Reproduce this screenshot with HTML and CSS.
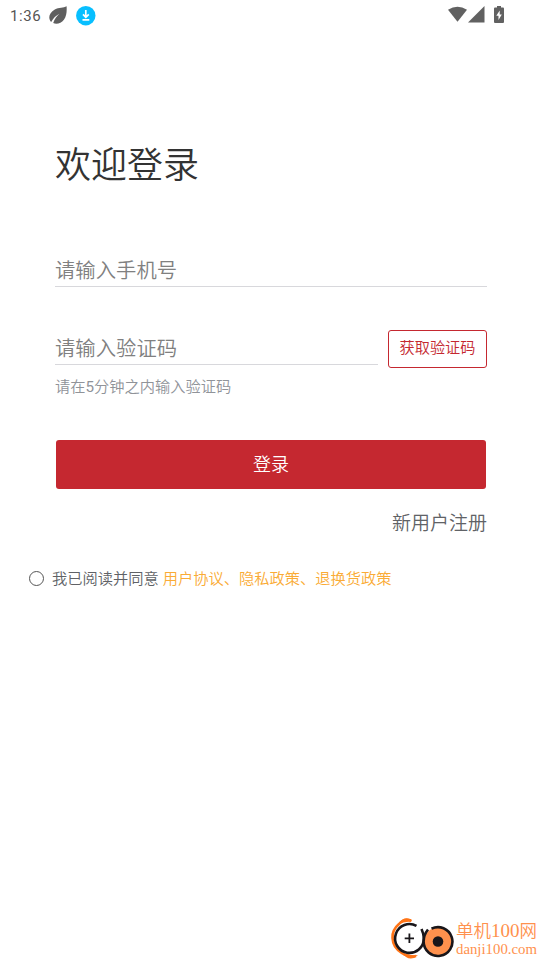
FILE: index.html
```
<!DOCTYPE html>
<html lang="zh-CN">
<head>
<meta charset="utf-8">
<title>欢迎登录</title>
<link rel="stylesheet" href="styles.css">
</head>
<body>
<div class="app">
  <header class="status">
    <span class="clock">1:36</span>
    <svg class="leaf" width="18" height="18" viewBox="0 0 18 18"><path fill="#5f5f5f" d="M17.600.3C14.500 2.300 10 1.300 5.800 3.500C1.600 5.700-.2 9.600.4 12.400C.8 14.300 1.500 15.400 2.200 16.100C4 12.300 7.200 9.400 10.500 7.800C8 10 5.600 12.800 4.200 17C7.600 18.500 12.200 17.300 14.900 13.700C17.600 10 17.900 5.300 17.600.3Z"/></svg>
    <svg class="download" width="20" height="20" viewBox="0 0 20 20"><circle cx="9.800" cy="9.700" r="9.700" fill="#08bfff"/><path d="M9.800 4V11M7 8.300L9.800 11.300L12.800 8.300M6.500 13.800H13.300" fill="none" stroke="#fff" stroke-width="1.700"/></svg>
    <span class="spacer"></span>
    <svg class="wifi" width="19" height="16" viewBox="0 0 19 16"><path fill="#616161" d="M0 3.800Q9.500-2.200 19 3.800L9.500 15.800Z"/></svg>
    <svg class="signal" width="17" height="17" viewBox="0 0 17 17"><path fill="#616161" d="M16.500 0V16.500H0Z"/></svg>
    <svg class="battery" width="10" height="17" viewBox="0 0 10 17"><path fill="#616161" d="M3 0H7V1.500H9Q10 1.500 10 2.700V15.800Q10 17 9 17H1Q0 17 0 15.800V2.700Q0 1.500 1 1.500H3Z"/><path fill="#fff" d="M5.700 4.500L2.300 9.800H4.500V14L7.800 8.600H5.700Z"/></svg>
  </header>

  <main class="login">
    <h1 class="title">欢迎登录</h1>
    <div class="field">请输入手机号</div>
    <div class="code-row">
      <div class="field">请输入验证码</div>
      <button class="get-code">获取验证码</button>
    </div>
    <p class="hint">请在<span class="minutes">5</span>分钟之内输入验证码</p>
    <button class="submit">登录</button>
    <a class="register">新用户注册</a>
  </main>

  <div class="agreement">
    <span class="radio"></span>
    <span class="agree-text">我已阅读并同意</span>
    <span class="policies">用户协议、隐私政策、退换货政策</span>
  </div>

  <footer class="watermark">
    <svg class="logo" width="64" height="46" viewBox="0 0 64 46">
      <g transform="translate(0 2)">
        <path d="M21 4.500Q14 2 9 8Q2 14 2.500 22Q3 32 12 37Q19 42 26 40" fill="none" stroke="#ff7417" stroke-width="2.600"/>
        <path d="M8 9Q13-1 22 4L21 6Q15 5 8 9ZM12 36Q18 40 28 39Q22 45 16 41Z" fill="#ff7417"/>
      </g>
      <circle cx="19.500" cy="24.500" r="14.400" fill="#fff"/>
      <path d="M26.500 11.900A14.400 14.400 0 1 0 33.900 24.500Q34 20.500 31.500 15" fill="none" stroke="#19161a" stroke-width="2.600"/>
      <path d="M14.700 24.300H24M19.400 19.600V29" stroke="#19161a" stroke-width="1.800"/>
      <circle cx="48" cy="27.500" r="14" fill="#ff914d"/>
      <path d="M41.500 14.700A14.400 14.400 0 1 1 33.600 27.500Q33.600 21 38 15.500" fill="none" stroke="#19161a" stroke-width="2.600"/>
      <circle cx="48" cy="27.500" r="5.300" fill="#19161a"/>
    </svg>
    <div class="brand">
      <span class="brand-name">单机<span class="digits">100</span>网</span>
      <span class="brand-url">danji100.com</span>
    </div>
  </footer>
</div>
</body>
</html>
```
FILE: styles.css
```
* { box-sizing: border-box; }
body { margin: 0; background: #fff; font-family: "Noto Sans CJK SC", sans-serif; font-weight: 350; }
svg { display: block; flex: none; }
button { appearance: none; margin: 0; padding: 0; font-family: inherit; font-weight: inherit; }
.app { display: flex; flex-direction: column; width: 540px; height: 960px; overflow: hidden; }

.status { display: flex; align-items: flex-start; height: 32px; padding: 6px 36px 0 10px; }
.clock { width: 39px; font: 400 15px/20px Roboto, sans-serif; letter-spacing: .6px; color: #555; }
.download { margin-left: 9px; }
.spacer { flex: 1; }
.signal { margin-left: 1px; }
.battery { margin-left: 9px; }

.login { display: flex; flex-direction: column; padding: 105px 53px 0 55px; }
.title { margin: 0; font-size: 36px; line-height: 50px; font-weight: inherit; color: #333; white-space: nowrap; }
.field { height: 38px; border-bottom: 1px solid #d8d8dc; font-size: 20.35px; line-height: 40px; color: #808080; white-space: nowrap; }
.title + .field { margin-top: 62px; }
.code-row { display: flex; align-items: flex-start; margin-top: 43px; }
.code-row .field { flex: 1; height: 35px; line-height: 35px; }
.get-code { width: 99px; height: 38px; margin-left: 10px; padding-bottom: 6px; border: 1px solid #c52830; border-radius: 3px; background: #fff; color: #c52830; font-size: 15.2px; line-height: 30px; }
.hint { margin: 7px 0 0; font-family: Roboto, "Noto Sans CJK SC", sans-serif; font-size: 15.25px; line-height: 24px; color: #909399; }
.minutes { font-weight: 400; }
.submit { height: 49px; margin: 41px 1px 0; padding-bottom: 4px; border: 0; border-radius: 3px; background: #c52830; color: #fff; font-size: 18px; line-height: 44px; }
.register { align-self: flex-end; margin-top: 18px; font-size: 19px; line-height: 30px; color: #606266; }

.agreement { display: flex; align-items: center; height: 24px; margin: 29px 0 0 29px; font-size: 15.25px; line-height: 22px; color: #606266; white-space: nowrap; }
.agree-text, .policies { padding-bottom: 2px; }
.radio { width: 15px; height: 15px; margin-right: 8px; border: 1px solid #555; border-radius: 50%; }
.policies { margin-left: 4px; color: #faab35; }

.watermark { display: flex; align-items: flex-start; height: 44px; margin: auto 0 0 390px; }
.logo { margin-top: -2px; }
.brand { display: flex; flex-direction: column; margin-left: 2px; color: #ff914d; white-space: nowrap; }
.brand-name { height: 26px; font-size: 17.5px; line-height: 28px; }
.digits { font-family: "Liberation Serif", serif; font-size: 19px; }
.brand-url { font-family: "Liberation Serif", serif; font-size: 14.8px; line-height: 14px; }
```
